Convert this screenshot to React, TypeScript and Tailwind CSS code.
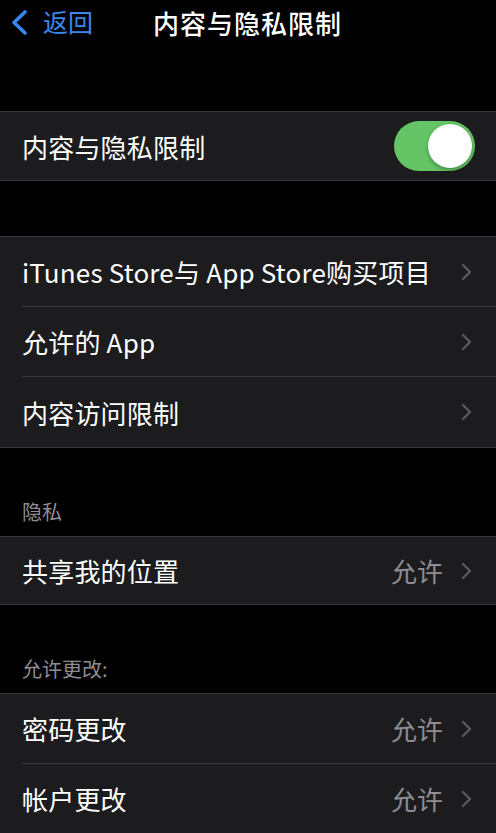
import { ReactNode } from "react";

const font = { fontFamily: '"Noto Sans CJK SC", "Noto Sans", sans-serif' };

function Chevron() {
  return (
    <svg width="11" height="18" viewBox="0 0 11 18" className="shrink-0">
      <path d="M2 2 L9 9 L2 16" fill="none" stroke="#5a5a5e" strokeWidth="2.4" strokeLinecap="round" strokeLinejoin="round" />
    </svg>
  );
}

function Row({ label, value, last, right, h = "h-[70px]" }: { label: string; value?: string; last?: boolean; right?: ReactNode; h?: string }) {
  return (
    <div className="pl-[22px]">
      <div className={`flex ${h} items-center pr-[24px] ${last ? "" : "border-b border-[#38383a]"}`}>
        <span className="flex-1 text-[26px] text-white tracking-[0.2px]">{label}</span>
        {right ?? (
          <div className="flex items-center gap-[18px]">
            {value && <span className="text-[26px] text-[#8d8d93]">{value}</span>}
            <Chevron />
          </div>
        )}
      </div>
    </div>
  );
}

function Group({ children }: { children: ReactNode }) {
  return <div className="bg-[#1c1c1e] border-y border-[#38383a]">{children}</div>;
}

function Header({ text }: { text: string }) {
  return <div className="pl-[22px] pt-[50px] pb-[10px] h-[88px] text-[20px] leading-[28px] text-[#8d8d93]">{text}</div>;
}

function Toggle() {
  return (
    <div className="relative w-[81px] h-[50px] rounded-full bg-[#65c466] -mr-[3px]">
      <div className="absolute right-[3px] top-[3px] w-[44px] h-[44px] rounded-full bg-white shadow-[0_2px_4px_rgba(0,0,0,0.3)]" />
    </div>
  );
}

export default function App() {
  return (
    <div className="w-[496px] h-[833px] bg-black overflow-hidden" style={font}>
      <div className="relative flex h-[44px] items-center">
        <div className="flex items-center pl-[10px] gap-[14px] text-[#3a87f0]">
          <svg width="19" height="27" viewBox="0 0 19 27">
            <path d="M15 3 L4 13.5 L15 24" fill="none" stroke="#3a87f0" strokeWidth="3.6" strokeLinecap="round" strokeLinejoin="round" />
          </svg>
          <span className="text-[25px]">返回</span>
        </div>
        <div className="absolute left-[153px] text-[26px] font-medium text-white tracking-[1px]">内容与隐私限制</div>
      </div>
      <div className="h-[67px]" />
      <Group>
        <Row label="内容与隐私限制" last h="h-[68px]" right={<Toggle />} />
      </Group>
      <div className="h-[55px]" />
      <Group>
        <Row label="iTunes Store与 App Store购买项目" />
        <Row label="允许的 App" />
        <Row label="内容访问限制" last />
      </Group>
      <Header text="隐私" />
      <Group>
        <Row label="共享我的位置" value="允许" last h="h-[67px]" />
      </Group>
      <Header text="允许更改:" />
      <Group>
        <Row label="密码更改" value="允许" />
        <Row label="帐户更改" value="允许" />
      </Group>
    </div>
  );
}
